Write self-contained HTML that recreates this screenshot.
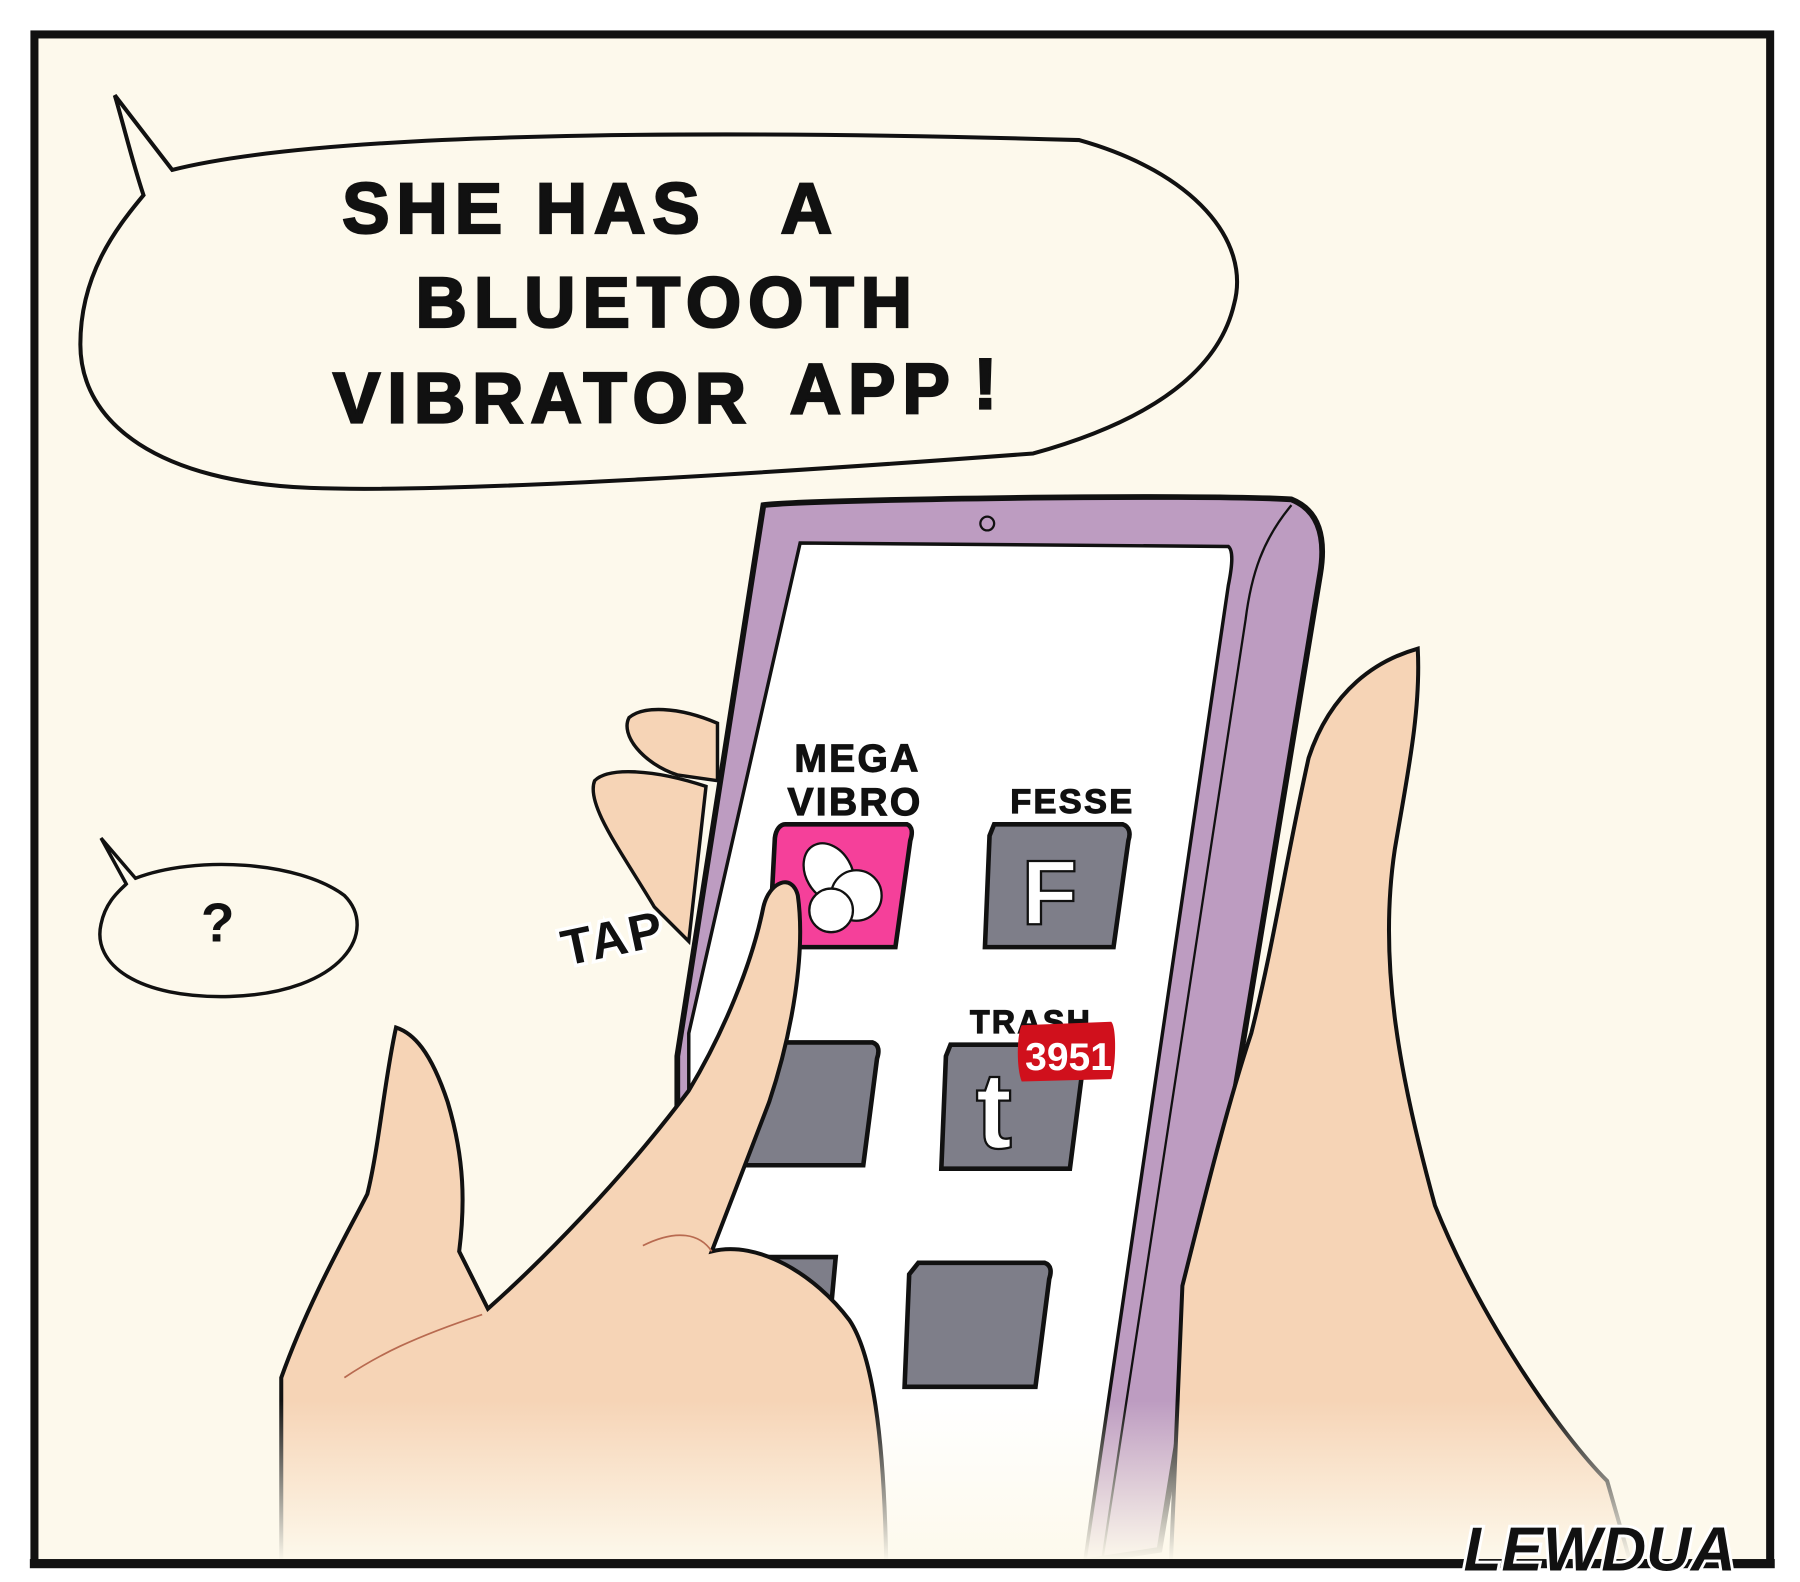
<!DOCTYPE html>
<html><head><meta charset="utf-8"><style>
html,body{margin:0;padding:0;background:#fff}
svg{display:block}
text{font-family:"Liberation Sans",sans-serif;font-weight:bold}
</style></head><body>
<svg width="1800" height="1582" viewBox="0 0 1568 1378" preserveAspectRatio="none" xmlns="http://www.w3.org/2000/svg">
<defs>
<linearGradient id="fade" x1="0" y1="0" x2="0" y2="1">
<stop offset="0" stop-color="#fdf9ec" stop-opacity="0"/>
<stop offset="1" stop-color="#fdf9ec" stop-opacity="1"/>
</linearGradient>
</defs>
<rect width="1568" height="1378" fill="#fff"/>
<rect x="30" y="30" width="1512" height="1332" fill="#fdf9ec" stroke="#111" stroke-width="7"/>

<path d="M100,83 L150,148 C300,110 700,115 940,122 C1040,150 1090,210 1075,265 C1060,330 990,370 900,395 C700,410 400,430 270,425 C140,420 70,370 70,300 C70,240 100,200 125,170 C115,140 108,110 100,83 Z" fill="#fdf9ec" stroke="#111" stroke-width="3.5"/>
<g font-size="62" fill="#111" stroke="#111" stroke-width="2" letter-spacing="6" style="font-weight:normal">
<text x="298" y="203">SHE HAS</text><text x="680" y="203">A</text>
<text x="362" y="285">BLUETOOTH</text>
<text x="290" y="368">VIBRATOR</text><text x="688" y="360">APP</text><text x="848" y="356">!</text>
</g>

<path d="M88,730 L118,765 C170,745 260,750 300,780 C330,810 300,865 200,868 C120,870 80,840 88,805 C92,785 105,775 110,770 Z" fill="#fdf9ec" stroke="#111" stroke-width="3"/>
<text x="175" y="820" font-size="48" fill="#111" font-weight="normal">?</text>

<path d="M625,630 C590,615 560,615 548,625 C540,640 560,665 590,675 L625,680 Z" fill="#f6d4b6" stroke="#111" stroke-width="3"/>
<path d="M615,685 C570,670 530,668 518,680 C510,700 540,740 570,790 L600,820 Z" fill="#f6d4b6" stroke="#111" stroke-width="3"/>

<path d="M665,440 C700,435 1050,430 1125,435 C1150,445 1155,470 1150,500 L1010,1350 L945,1360 L590,1360 L590,920 Z" fill="#bd9cc1" stroke="#111" stroke-width="5"/>
<path d="M1125,440 C1100,470 1090,500 1085,540 L960,1360" fill="none" stroke="#111" stroke-width="2"/>
<path d="M697,473 L1070,476 C1075,480 1073,495 1070,510 L945,1360 L600,1360 L600,900 Z" fill="#fff" stroke="#111" stroke-width="3"/>
<circle cx="860" cy="456" r="6" fill="none" stroke="#111" stroke-width="2"/>

<path d="M684,718 L790,718 C795,720 795,726 793,732 L780,825 L670,825 L675,730 C676,722 680,718 684,718 Z" fill="#f5409a" stroke="#111" stroke-width="4"/>
<ellipse cx="722" cy="760" rx="20" ry="27" transform="rotate(-30 722 760)" fill="#fff" stroke="#111" stroke-width="2"/>
<circle cx="746" cy="780" r="22" fill="#fff" stroke="#111" stroke-width="2"/>
<circle cx="724" cy="793" r="19" fill="#fff" stroke="#111" stroke-width="2"/>
<path d="M866,718 L978,718 C984,720 985,726 983,732 L970,825 L858,825 L862,728 Z" fill="#7e7e89" stroke="#111" stroke-width="4"/>
<text x="890" y="805" font-size="80" fill="#fff" stroke="#111" stroke-width="2">F</text>
<path d="M645,908 L760,908 C766,910 766,916 764,922 L752,1015 L640,1015 L642,918 Z" fill="#7e7e89" stroke="#111" stroke-width="4"/>
<path d="M828,910 L940,910 C946,912 946,918 944,924 L932,1018 L820,1018 L824,920 Z" fill="#7e7e89" stroke="#111" stroke-width="4"/>
<text x="850" y="1000" font-size="95" fill="#fff" stroke="#111" stroke-width="2" font-family="Liberation Serif">t</text>
<path d="M633,1095 L728,1095 L722,1160 L630,1160 Z" fill="#7e7e89" stroke="#111" stroke-width="4"/>
<path d="M800,1100 L910,1100 C916,1102 916,1108 914,1114 L902,1208 L788,1208 L792,1110 Z" fill="#7e7e89" stroke="#111" stroke-width="4"/>

<g font-size="34" fill="#111" stroke="#111" stroke-width="1" letter-spacing="2" style="font-weight:normal">
<text x="692" y="672">MEGA</text><text x="686" y="710">VIBRO</text>
<text x="880" y="708" font-size="30">FESSE</text>
<text x="845" y="900" font-size="28">TRASH</text>
</g>
<path d="M890,893 L968,890 C973,895 972,930 968,940 L890,942 C885,930 886,900 890,893 Z" fill="#d0101c"/>
<text x="893" y="932" font-size="34" fill="#fff" font-weight="normal" font-family="Liberation Mono">3951</text>

<path d="M245,1360 L245,1200 C270,1130 305,1070 320,1040 C330,1000 335,940 345,895 C360,900 375,915 390,960 C405,1010 405,1050 400,1090 L425,1140 C470,1100 540,1030 600,950 C630,900 655,840 665,790 C670,768 690,760 695,780 C702,830 690,900 670,960 L620,1090 C660,1080 710,1110 740,1150 C760,1180 770,1250 772,1360 Z" fill="#f6d4b6" stroke="#111" stroke-width="3.5"/>
<path d="M300,1200 C330,1180 360,1165 420,1145" fill="none" stroke="#b86a50" stroke-width="1.5"/>
<path d="M560,1085 C590,1070 610,1075 620,1090" fill="none" stroke="#b86a50" stroke-width="1.5"/>

<path d="M1020,1360 L1030,1120 C1050,1040 1070,960 1090,900 C1110,820 1120,750 1140,660 C1160,600 1200,575 1235,565 C1238,620 1225,680 1215,740 C1200,840 1220,940 1250,1050 C1290,1150 1360,1250 1400,1290 L1420,1360 Z" fill="#f6d4b6" stroke="#111" stroke-width="3.5"/>

<text x="487" y="833" font-size="44" fill="#111" stroke="#fff" stroke-width="6" paint-order="stroke" transform="rotate(-12 530 810)" letter-spacing="2">TAP</text>

<rect x="240" y="1220" width="1200" height="140" fill="url(#fade)"/>
<rect x="26" y="1358" width="1520" height="8" fill="#111"/>
<text x="1275" y="1368" font-size="54" fill="#111" stroke="#fff" stroke-width="5" paint-order="stroke" font-style="italic">LEWDUA</text>
</svg>
</body></html>
